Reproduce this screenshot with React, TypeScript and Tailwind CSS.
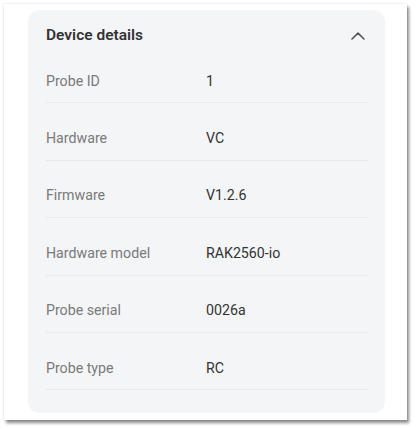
import React from "react";

const rows: [string, string][] = [
  ["Probe ID", "1"],
  ["Hardware", "VC"],
  ["Firmware", "V1.2.6"],
  ["Hardware model", "RAK2560-io"],
  ["Probe serial", "0026a"],
  ["Probe type", "RC"],
];

export default function App() {
  return (
    <div className="w-[417px] h-[429px] bg-white pt-[4px] pl-[4px]" style={{ fontFamily: "Roboto, 'Noto Sans', sans-serif" }}>
      <div className="w-[403px] h-[416px] bg-white shadow-[2px_3px_3px_rgba(0,0,0,0.45),0_0_2px_rgba(0,0,0,0.15)] pt-[6px] pl-[24px]">
        <div className="w-[357px] h-[403px] bg-[#f4f5f7] rounded-[12px] pl-[18px] pr-[17px] pt-[15px]">
          <div className="flex items-center justify-between h-[21px]">
            <span className="text-[15.5px] font-semibold text-[#333333] leading-[21px]">Device details</span>
            <svg width="14" height="8" viewBox="0 0 14 8" className="mr-[3px]">
              <path d="M1 7 L7 1.2 L13 7" fill="none" stroke="#555" strokeWidth="1.6" strokeLinecap="round" strokeLinejoin="round" />
            </svg>
          </div>
          <div>
            {rows.map(([k, v]) => (
              <div key={k} className="flex items-center pt-[25px] pb-[12px] border-b border-[#e8e9ec] h-[57.4px]">
                <span className="w-[160px] text-[14.2px] leading-[20px] text-[#7a7a7a]">{k}</span>
                <span className="text-[14.2px] leading-[20px] text-[#333333]">{v}</span>
              </div>
            ))}
          </div>
        </div>
      </div>
    </div>
  );
}
